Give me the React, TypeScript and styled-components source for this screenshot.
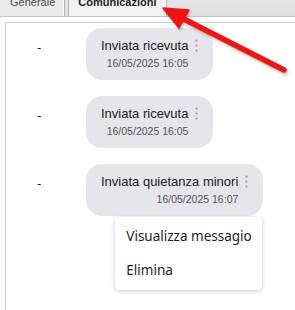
import { FC } from 'react';
import styled, { createGlobalStyle } from 'styled-components';

type Message = {
  id: number;
  title: string;
  date: string;
  menuOpen?: boolean;
};

const messages: Message[] = [
  { id: 1, title: 'Inviata ricevuta', date: '16/05/2025 16:05' },
  { id: 2, title: 'Inviata ricevuta', date: '16/05/2025 16:05' },
  { id: 3, title: 'Inviata quietanza minori', date: '16/05/2025 16:07', menuOpen: true },
];

const GlobalStyle = createGlobalStyle`
  html, body {
    margin: 0;
    padding: 0;
    background: #fff;
    font-family: "Liberation Sans", Arial, sans-serif;
  }
`;

const Page = styled.div`
  position: relative;
  width: 295px;
  height: 310px;
  overflow: hidden;
`;

const TabBar = styled.div`
  display: flex;
  gap: 3px;
  height: 17px;
  background: linear-gradient(#e6e6e6, #dedede);
  border-bottom: 1px solid #c4c4c4;
  box-sizing: border-box;
`;

const Tab = styled.div<{ $active?: boolean }>`
  display: flex;
  align-items: flex-end;
  box-sizing: border-box;
  padding: 0 9px 8px ${(p) => (p.$active ? '9px' : '10px')};
  font-size: 11px;
  line-height: 12px;
  font-weight: ${(p) => (p.$active ? 'bold' : 'normal')};
  color: ${(p) => (p.$active ? '#1e1e1e' : '#4a4a4a')};
  background: ${(p) => (p.$active ? '#f3f3f3' : '#ececec')};
  border-right: 1px solid #b4b4b4;
  border-left: ${(p) => (p.$active ? '1px solid #b4b4b4' : 'none')};
  box-shadow: inset -1px 0 0 #fafafa;
`;

const Panel = styled.div`
  margin: 5px 0 0 5px;
  min-height: 300px;
  border-top: 1px solid #cfcfcf;
  border-left: 1px solid #cfcfcf;
  padding-top: 5px;
  display: flex;
  flex-direction: column;
  gap: 16px;
`;

const Row = styled.div`
  display: flex;
  align-items: flex-start;
`;

const Dash = styled.div`
  width: 80px;
  box-sizing: border-box;
  padding: 12px 0 0 31px;
  font-size: 13px;
  line-height: 15px;
  color: #222;
`;

const BubbleWrap = styled.div`
  position: relative;
`;

const Bubble = styled.div`
  display: flex;
  align-items: flex-start;
  gap: 7px;
  background: #e5e5ea;
  border-radius: 16px;
  padding: 10px 15px 10px 15px;
`;

const BubbleText = styled.div`
  display: flex;
  flex-direction: column;
  align-items: flex-end;
`;

const Title = styled.div`
  font-size: 13px;
  line-height: 16px;
  color: #222;
  white-space: nowrap;
`;

const Stamp = styled.div`
  margin-top: 3px;
  font-size: 10.5px;
  line-height: 13px;
  color: #555;
  white-space: nowrap;
`;

const Kebab = styled.svg`
  margin-top: 1px;
  flex: none;
`;

const Menu = styled.div`
  position: absolute;
  top: calc(100% + 1px);
  right: 1px;
  width: 147px;
  box-sizing: border-box;
  padding: 2px 0 3px;
  background: #fff;
  border-radius: 4px;
  box-shadow: 0 1px 4px rgba(0, 0, 0, 0.22);
  z-index: 2;
`;

const MenuItem = styled.div`
  height: 34px;
  line-height: 34px;
  padding: 0 11px;
  font-family: "Noto Sans", "Open Sans", sans-serif;
  font-size: 13.5px;
  color: #222;
  white-space: nowrap;
`;

const Arrow = styled.svg`
  position: absolute;
  left: 0;
  top: 0;
  pointer-events: none;
  filter: drop-shadow(1px 2px 1px rgba(0, 0, 0, 0.25));
  z-index: 3;
`;

const KebabIcon: FC = () => (
  <Kebab width="3" height="14" viewBox="0 0 3 14">
    <circle cx="1.5" cy="1.5" r="1.1" fill="#9a9a9a" />
    <circle cx="1.5" cy="6.5" r="1.1" fill="#9a9a9a" />
    <circle cx="1.5" cy="11.5" r="1.1" fill="#9a9a9a" />
  </Kebab>
);

const MessageRow: FC<{ message: Message }> = ({ message }) => (
  <Row>
    <Dash>-</Dash>
    <BubbleWrap>
      <Bubble>
        <BubbleText>
          <Title>{message.title}</Title>
          <Stamp>{message.date}</Stamp>
        </BubbleText>
        <KebabIcon />
      </Bubble>
      {message.menuOpen && (
        <Menu>
          <MenuItem>Visualizza messagio</MenuItem>
          <MenuItem>Elimina</MenuItem>
        </Menu>
      )}
    </BubbleWrap>
  </Row>
);

export default function App() {
  return (
    <Page>
      <GlobalStyle />
      <TabBar>
        <Tab>Generale</Tab>
        <Tab $active>Comunicazioni</Tab>
      </TabBar>
      <Panel>
        {messages.map((m) => (
          <MessageRow key={m.id} message={m} />
        ))}
      </Panel>
      <Arrow width="295" height="310" viewBox="0 0 295 310">
        <line x1="284" y1="70" x2="180" y2="17" stroke="#f01414" strokeWidth="5.5" strokeLinecap="round" />
        <polygon points="163,8 189,10 179,28" fill="#f01414" strokeLinejoin="round" stroke="#f01414" strokeWidth="1.5" />
      </Arrow>
    </Page>
  );
}
